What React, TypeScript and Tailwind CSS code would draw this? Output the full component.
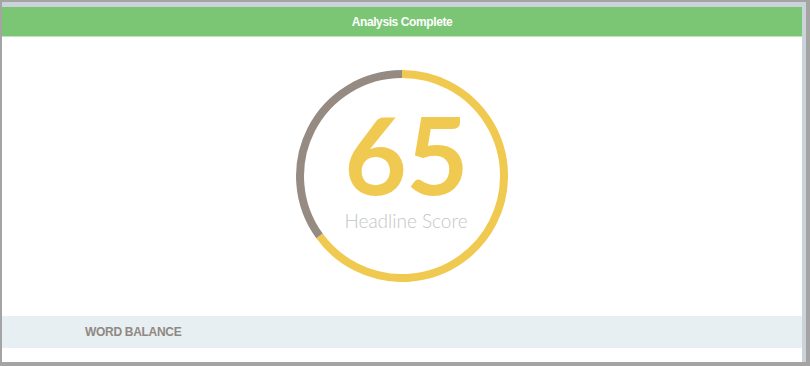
import React from 'react';

const SCORE = 65;

const ScoreRing = () => {
  return (
    <div className="relative w-[212px] h-[212px]">
      <svg width="212" height="212" viewBox="0 0 212 212" className="absolute inset-0">
        {/* yellow runs clockwise from the top, gray fills the rest */}
        <path d="M106 4 A102 102 0 1 1 23.5 165.95" fill="none" stroke="#f0ca50" strokeWidth="8" />
        <path d="M106 4 A102 102 0 0 0 23.5 165.95" fill="none" stroke="#958b82" strokeWidth="8" />
      </svg>
      <div className="absolute inset-0 flex flex-col items-center pt-[41px] pl-[8px]">
        <div className="text-[108px] leading-[84px] font-bold text-[#f0ca50] font-['Lato',sans-serif] tracking-[-1px]">
          {SCORE}
        </div>
        <div className="mt-[16px] text-[19px] leading-none font-light text-[#c2c6ca] font-['Lato',sans-serif]">
          Headline Score
        </div>
      </div>
    </div>
  );
};

export default function App() {
  return (
    <div className="w-[810px] h-[366px] bg-[#a4a4a4] pl-[2px] pt-[2px] pr-[4px] pb-[4px] overflow-hidden">
      <div className="h-full flex flex-col bg-[#cbd3da]">
        <div className="h-[5px] shrink-0" />
        <div className="flex flex-1 min-h-0">
          <div className="flex-1 flex flex-col bg-white">
            <header className="h-[30px] shrink-0 bg-[#7ac674] border-b border-[#bfe5bb] flex items-center justify-center">
              <span className="text-white text-[12px] font-bold tracking-[-0.4px] font-['Liberation_Sans',Arial,sans-serif]">
                Analysis Complete
              </span>
            </header>
            <main className="flex justify-center pt-[33px]">
              <ScoreRing />
            </main>
            <section className="mt-[34px] h-[32px] bg-[#e8eff2] flex items-center pl-[83px]">
              <span className="text-[12px] font-bold text-[#8f8882] tracking-[-0.3px] font-['Liberation_Sans',Arial,sans-serif]">
                WORD BALANCE
              </span>
            </section>
          </div>
          <div className="w-[4px] shrink-0" />
        </div>
      </div>
    </div>
  );
}
